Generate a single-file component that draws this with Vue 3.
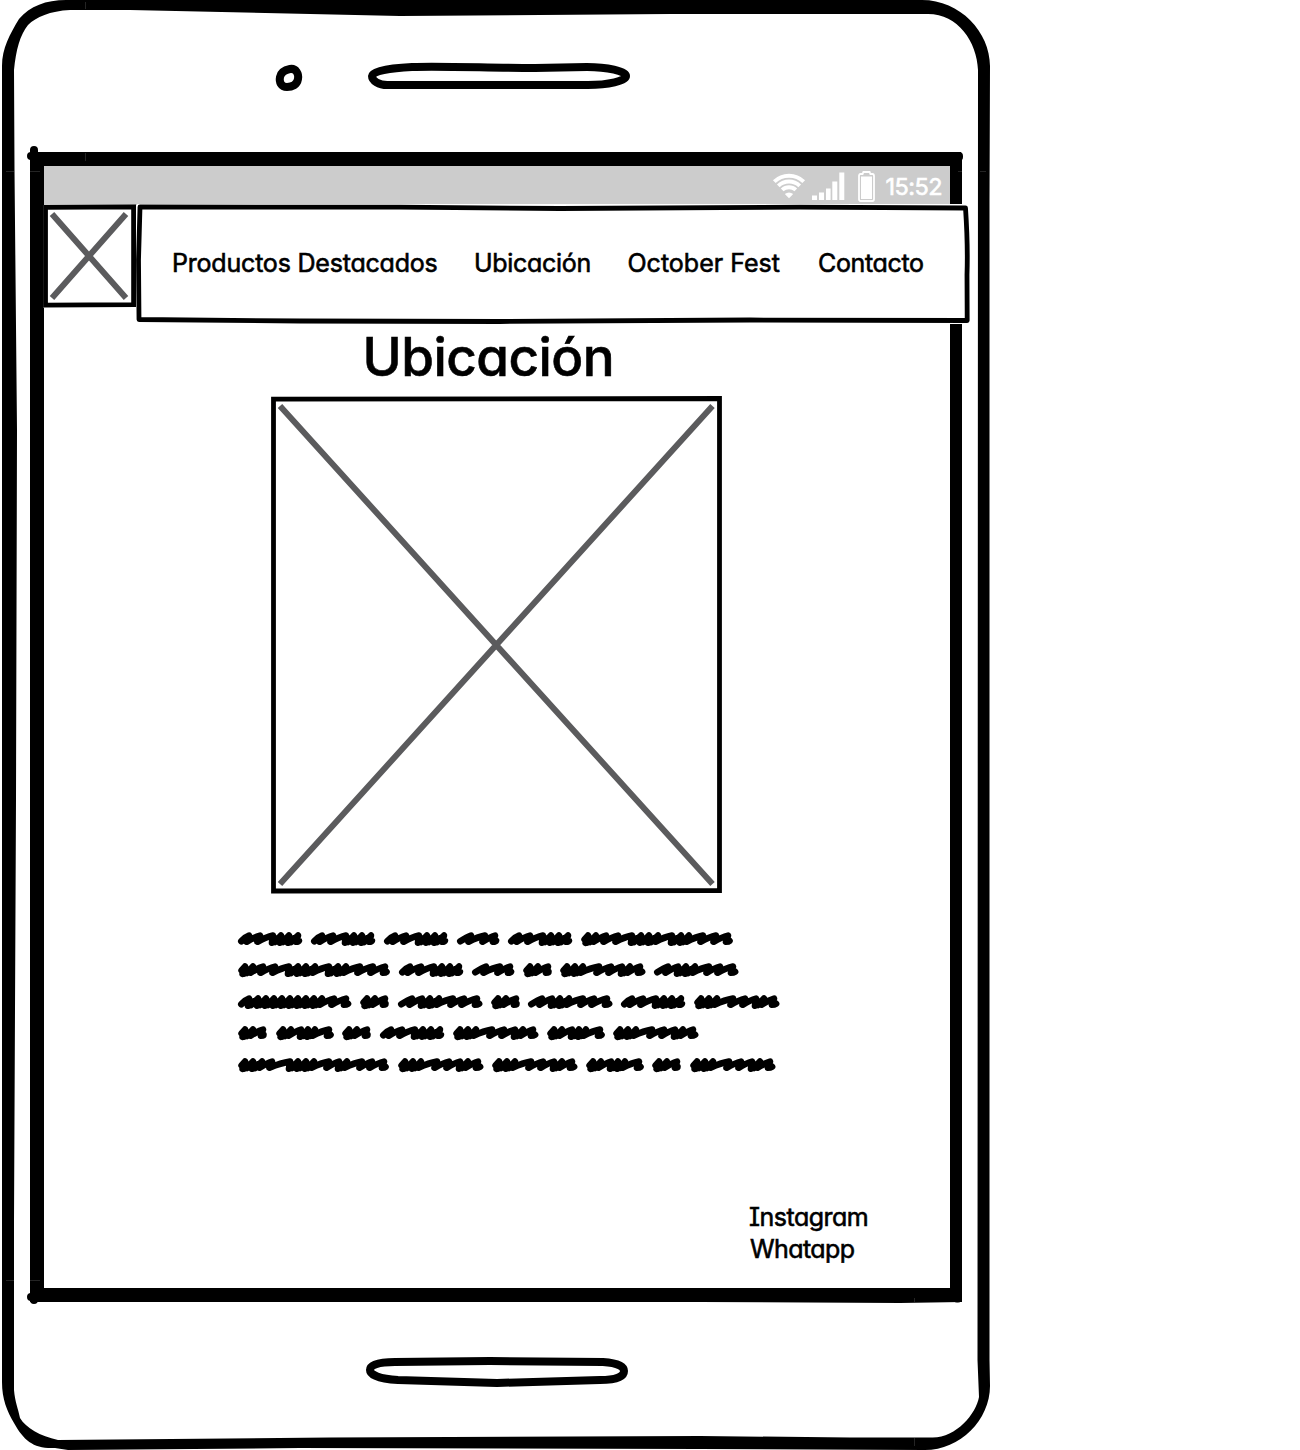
<script setup>
const links = [
  { label: 'Productos Destacados', name: 'featured' },
  { label: 'Ubicación', name: 'location' },
  { label: 'October Fest', name: 'october' },
  { label: 'Contacto', name: 'contact' },
]

// Scribbled words: width, and the x of each pen peak
const words = {
  a: { w: 64.4, p: [11, 22, 35, 43, 51, 60], thin: true },
  b: { w: 42.5, p: [14, 28, 38], thin: true },
  c: { w: 29, p: [7, 15, 25] },
  d: { w: 58, p: [7, 15, 25, 32, 39, 53] },
  e: { w: 85.6, p: [7, 15, 23, 39, 51, 62, 70, 80] },
  f: { w: 84.6, p: [14, 24, 32, 41, 55, 66, 79], thin: true },
  g: { w: 113.5, p: [11, 20, 28, 36, 44, 52, 60, 68, 76, 84, 96, 108], thin: true },
  h: { w: 152, p: [7, 15, 25, 37, 51, 60, 68, 77, 91, 100, 108, 122, 135, 147] },
  i: { w: 151, p: [7, 15, 24, 34, 52, 60, 68, 76, 91, 101, 109, 124, 134, 146] },
}
const lines = ['aaabah', 'habcef', 'gcfcfae', 'cdcaede', 'ieedce']

function scribble({ w, p, thin }) {
  let d = thin ? `M3.3 9.2 Q${p[0] - 4} 5 ${p[0]} 3.6` : `M3.6 7.5 L${p[0]} 3.6 L4.6 10.8 L${p[0]} 5`
  p.forEach((x, n) => {
    const next = p[n + 1]
    if (next === undefined) {
      d += ` L${x - 2} 9.8 Q${x + 0.5} 9.8 ${w - 3.5} 8.8`
    } else if (next - x < 10) {
      d += ` L${x - 1} 10.8 L${(x + next) / 2} 6.5 L${x + 2} 10 L${next} 3.6`
    } else {
      d += ` L${x - 2.5} 9.8 Q${x + (next - x) * 0.5} 5 ${next} 3.6`
    }
  })
  return d
}
</script>

<template>
  <div class="page">
    <svg class="device" width="1000" height="1450" viewBox="0 0 1000 1450" aria-hidden="true">
      <path fill-rule="evenodd" d="M2 66 C2 48 10 34 19 19 C30 6 46 0 66 0 H922 C960 0 990 32 990 66 L989.500 200 V1360 L990 1386 C990 1420 960 1450 925 1450 L700 1449 L300 1448 L68 1450 L55 1448 C34 1449 24 1441 14 1423 C7 1411 2 1399 2 1382 Z M14 70 L14.5 170 L17 430 L16 800 L14 1220 L14 1390 C15 1402 18 1408 20 1418 C26 1428 40 1436 58 1440 L330 1437.5 L700 1436 L850 1437.5 H932 C956 1438 976 1414 979 1397 L977.5 1360 L978 70 C977 42 958 14 928 14 H670 L400 16 L130 10 H70 C50 11 36 17 28 25 C20 35 16 50 14 70 Z" />
      <path fill-rule="evenodd" d="M30 152 H961 L962 157 V1302 L900 1303 L700 1302 H30 Z M44 166 V1288 H950 V166 Z" />
      <g class="pen dots">
        <path d="M34 150 V154 M31 156 H34 M959 156 V157 M34 1300 V1297 M31 1297 H34 M957 1298.500 H958" />
      </g>
      <path class="seam" d="M6 171.5 H14 M30 171.5 H40 M980 171.5 H986 M958 171.5 H962 M85.5 2 V9 M85.5 153 V161 M6 1280.5 H14 M30 1280.5 H40 M914.5 1298 V1303 M914.5 1438 V1446" />
      <g class="pen">
        <path d="M290 69 C296 68 299 74 298 79 C297 85 292 87 287 87 C281 87 279 82 280 77 C281 72 285 70 290 69 Z" />
        <path d="M412 67 C445 66 490 68 535 68 L587 67 C607 67 626 71 626 76 C626 81 608 85 588 85 H390 C378 86 372 80 372 76 C372 71 390 68 412 67 Z" />
        <path d="M395 1362 L490 1361 L603 1362 C619 1363 624 1367 624 1371 C624 1377 615 1380 600 1380 L497 1383 L398 1380 C380 1379 370 1375 370 1370 C370 1365 378 1362 395 1362 Z" />
      </g>
    </svg>

    <main class="screen">
      <div class="status">
        <svg class="wifi" width="34" height="26" viewBox="0 0 34 26" aria-hidden="true">
          <path d="M2.3 8.7 A21 21 0 0 1 31.7 8.7 M6.3 12.8 A15.5 15.5 0 0 1 27.7 12.8 M10.2 16.9 A10 10 0 0 1 23.8 16.9" />
          <path class="tip" d="M12.8 21 Q17 18 21.2 21 L17 25.2 Z" />
        </svg>
        <svg class="signal" width="33" height="28" viewBox="0 0 33 28" aria-hidden="true">
          <path d="M0 23.5h5V28H0z M7 20.5h5V28H7z M14 16.5h4.6V28H14z M20.3 9.5h5V28h-5z M27.3 0.5h5V28h-5z" />
        </svg>
        <svg class="battery" width="17" height="31" viewBox="0 0 17 31" aria-hidden="true">
          <path class="shell" d="M2.5 3 H4.6 L5.4 1 H11.6 L12.4 3 H14.5 Q16 3 16 5 V28 Q16 30 14.5 30 H2.5 Q1 30 1 28 V5 Q1 3 2.5 3 Z" />
          <rect x="3" y="5.5" width="11" height="22.5" />
        </svg>
        <span class="time">15:52</span>
      </div>

      <header>
        <svg class="logo" width="94" height="103" viewBox="43 204.500 94 103" aria-hidden="true">
          <path class="fill" d="M43 204.500 H136 V307 H43 Z" />
          <path class="cross" d="M52 213.500 L126 297.500 M126 213.500 L52 297.500" />
          <path class="edge sharp" d="M45.500 206.800 L133.600 206.300 V304.200 L45.500 304.700 Z" />
        </svg>
        <nav>
          <svg class="navframe" width="834" height="120" viewBox="136 204 834 120" aria-hidden="true">
            <path class="fill" d="M137 204 H962 V208 H969 V324 H137 Z" />
            <path class="edge" d="M140 207 L400 207.200 L560 208.500 L800 207.200 L965.500 208 Q968 245 967 275 L967.200 320.500 L750 320 L500 321.500 L300 321 L139 319.500 L138.500 260 Z" />
          </svg>
          <a v-for="l in links" :key="l.name" :class="l.name">{{ l.label }}</a>
        </nav>
      </header>

      <h1>Ubicación</h1>

      <svg class="picture" width="452" height="498" viewBox="0 0 452 498" aria-hidden="true">
        <path class="cross" d="M9 10 L441.500 488 M441.500 10 L9 488" />
        <path class="edge sharp" d="M2.500 3.200 L448.500 2.500 V494.500 L2.500 495 Z" />
      </svg>

      <div class="copy">
        <div v-for="(line, n) in lines" :key="n" class="line">
          <svg v-for="(k, m) in line" :key="m" :width="words[k].w" height="14" :viewBox="`0 0 ${words[k].w} 14`">
            <path :d="scribble(words[k])" />
          </svg>
        </div>
      </div>

      <footer>
        <div class="insta">Instagram</div>
        <div class="whats">Whatapp</div>
      </footer>
    </main>
  </div>
</template>

<style>
body { margin: 0; background: #fff; }
</style>

<style scoped>
.page {
  position: relative;
  width: 1300px;
  height: 1450px;
  overflow: hidden;
  box-sizing: border-box;
  padding: 166px 0 0 44px;
  color: #000;
  font-family: Inter, "Liberation Sans", sans-serif;
  font-feature-settings: "cv11", "cv08";
}
svg { display: block; overflow: visible; flex: none; }
.device { position: absolute; left: 0; top: 0; }
.pen { fill: none; stroke: #000; stroke-width: 8; stroke-linecap: round; stroke-linejoin: round; }
.seam { stroke: #3c3c3c; stroke-width: 0.6; }
.screen {
  position: relative;
  width: 906px;
  height: 1122px;
  display: flex;
  flex-direction: column;
}
.status {
  height: 39px;
  flex: none;
  box-sizing: border-box;
  display: flex;
  align-items: flex-start;
  padding: 4px 0 0 728px;
  background: #ccc;
  color: #fff;
  fill: #fff;
}
.wifi { margin-top: 3px; fill: none; stroke: #fff; stroke-width: 3.9; }
.wifi .tip { fill: #fff; stroke: none; }
.signal { margin: 2px 0 0 6px; }
.battery { margin: 1px 0 0 13px; }
.shell { fill: none; stroke: #fff; stroke-width: 1.8; }
.time { margin-left: 10.5px; font-size: 23.5px; line-height: 33px; letter-spacing: -0.55px; -webkit-text-stroke: 0.6px #fff; }
header { display: flex; height: 119px; margin: -0.5px 0 0 -1px; flex: none; }
.fill { fill: #fff; }
.edge { fill: none; stroke: #000; stroke-width: 4.8; stroke-linejoin: round; }
.sharp { stroke-linejoin: miter; }
.cross { fill: none; stroke: #5b5b5d; stroke-width: 6; }
nav {
  position: relative;
  width: 833px;
  margin-left: -1px;
  flex: none;
  display: flex;
  align-items: center;
  box-sizing: border-box;
  padding: 0 0 2px 36px;
}
.navframe { position: absolute; left: 0; top: -0.5px; }
nav a {
  position: relative;
  flex: none;
  font-size: 25px;
  line-height: 32px;
  white-space: nowrap;
  -webkit-text-stroke: 0.6px #000;
}
.featured { width: 302px; letter-spacing: -0.2px; }
.location { width: 153.5px; letter-spacing: -0.3px; }
.october { width: 190.5px; }
.contact { letter-spacing: -0.35px; }
h1 {
  margin: 0 0 0 318.5px;
  height: 72px;
  flex: none;
  font-size: 53px;
  line-height: 66px;
  font-weight: 500;
  letter-spacing: -0.55px;
  white-space: nowrap;
  -webkit-text-stroke: 0.6px #000;
}
.picture { margin-left: 227px; }
.copy { margin: 38px 0 0 194.3px; }
.line { display: flex; gap: 8.5px; height: 31.6px; }
.line path { fill: none; stroke: #000; stroke-width: 6.6; stroke-linecap: round; stroke-linejoin: round; }
footer { margin: 111.5px 0 0 706px; font-size: 25px; line-height: 32px; -webkit-text-stroke: 0.6px #000; white-space: nowrap; }
.insta { margin-left: -1px; letter-spacing: -0.5px; }
.whats { letter-spacing: -0.6px; }
</style>
